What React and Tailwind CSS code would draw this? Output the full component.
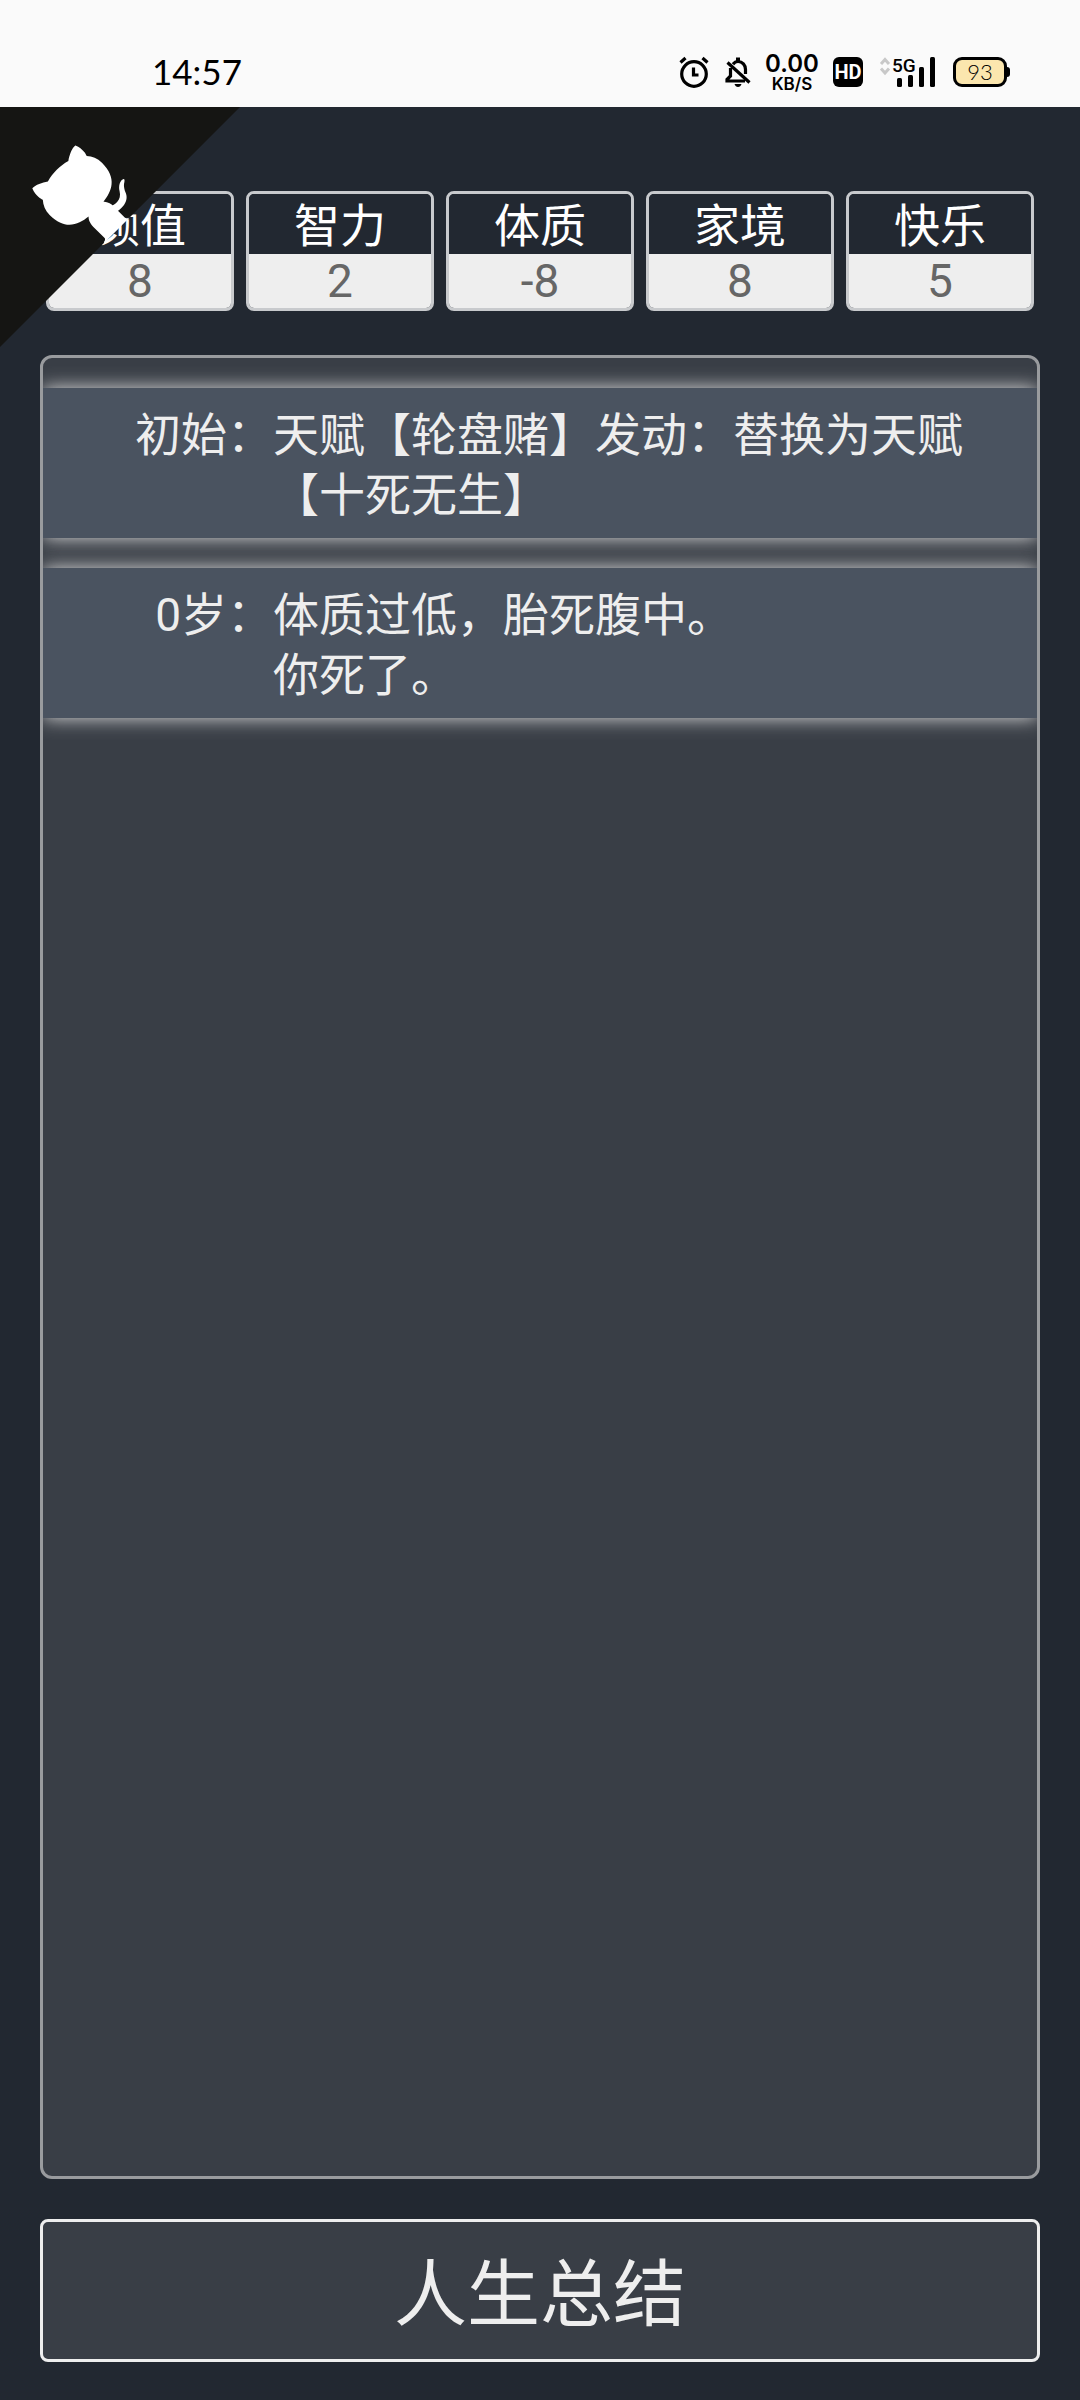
const STATS = [
  { label: '颜值', value: 8 },
  { label: '智力', value: 2 },
  { label: '体质', value: -8 },
  { label: '家境', value: 8 },
  { label: '快乐', value: 5 },
];

const TRAJECTORY = [
  { age: '初始：', lines: ['天赋【轮盘赌】发动：替换为天赋【十死无生】'] },
  { age: '0岁：', lines: ['体质过低，胎死腹中。', '你死了。'] },
];

function AlarmIcon() {
  return (
    <svg width="30" height="32" viewBox="0 0 30 32" fill="none" stroke="#000" className="shrink-0">
      <circle cx="15" cy="18" r="12.3" strokeWidth="3.2" />
      <path d="M14.500 11.500v7.500h5" strokeWidth="3.2" />
      <path d="M1.500 6.500l5-4.500M28.500 6.500l-5-4.500" strokeWidth="3.2" />
    </svg>
  );
}

function MutedBellIcon() {
  return (
    <svg width="26" height="32" viewBox="0 0 26 32" fill="none" stroke="#000" className="shrink-0">
      <path d="M8 8.2C9.500 6.200 11 5.500 13 5.500C17.500 5.500 20.500 9 20.500 13.500V18" strokeWidth="3.2" />
      <path d="M13 1.500v4" strokeWidth="4" />
      <path d="M5.500 12V20L2 23.500V25H20" strokeWidth="3.2" />
      <path d="M2.500 6.500L24.500 26.500" strokeWidth="3.2" />
      <path d="M9.500 28h7c-1 4-6 4-7 0z" fill="#000" stroke="none" />
    </svg>
  );
}

function SignalIcon() {
  return (
    <svg width="58" height="44" viewBox="0 -6 58 44" className="shrink-0">
      <path d="M2 8l4-4.500l4 4.500M2 12.500l4 4.500l4-4.500" fill="none" stroke="#c8c8c8" strokeWidth="3" />
      <text x="13" y="16" fontSize="19" fontWeight="500" fontFamily="Roboto, sans-serif">5G</text>
      <rect x="18" y="22" width="5" height="9" rx="1.500" />
      <rect x="29" y="19" width="5" height="12" rx="1.500" />
      <rect x="40" y="11" width="5" height="20" rx="1.500" />
      <rect x="51" y="1" width="5" height="30" rx="1.500" />
    </svg>
  );
}

function StatusBar() {
  return (
    <header className="h-[107px] bg-[#fafafa] text-black flex items-center justify-between pt-9 pl-[152px] pr-[70px]">
      <time className="font-['Lato',sans-serif] text-[35px] leading-10 pb-0.5">14:57</time>
      <div className="flex items-center">
        <AlarmIcon />
        <div className="ml-4"><MutedBellIcon /></div>
        <div className="ml-3.5 w-[54px] pt-0.5 text-center font-['Inter',sans-serif] font-semibold">
          <div className="text-[24px] leading-[22px]">0.00</div>
          <div className="text-[17px] leading-[18px]">KB/S</div>
        </div>
        <div className="ml-3.5 w-[30px] h-[30px] rounded-md bg-black text-white font-['Roboto',sans-serif] font-bold text-[20px] leading-[30px] text-center">
          HD
        </div>
        <div className="ml-4"><SignalIcon /></div>
        <div className="ml-4 flex items-center">
          <div className="w-[54px] h-[30px] rounded-[9px] border-[3px] border-black bg-[#fbe6ae] font-['Lato',sans-serif] font-light text-[22px] leading-6 text-center">
            93
          </div>
          <div className="w-[3px] h-[10px] bg-black rounded-r-sm" />
        </div>
      </div>
    </header>
  );
}

function GithubCorner() {
  return (
    <a href="https://github.com" aria-label="GitHub" className="absolute top-0 left-0">
      <svg width="240" height="240" viewBox="0 0 250 250" className="block -scale-x-100" aria-hidden="true">
        <path d="M0,0 L115,115 L130,115 L142,142 L250,250 L250,0 Z" fill="#151513" />
        <path d="M128.3,109.0 C113.8,99.7 119.0,89.6 119.0,89.6 C122.0,82.7 120.5,78.6 120.5,78.6 C119.2,72.0 123.4,76.3 123.4,76.3 C127.3,80.9 125.5,87.3 125.5,87.3 C122.9,97.6 130.6,101.9 134.4,103.2" fill="#fff" />
        <path d="M115.0,115.0 C114.9,115.1 118.7,116.5 119.8,115.4 L133.7,101.6 C136.9,99.2 139.9,98.4 142.2,98.6 C133.8,88.0 127.5,74.4 143.8,58.0 C148.5,53.4 154.0,51.2 159.7,51.0 C160.3,49.4 163.2,43.6 171.4,40.1 C171.4,40.1 176.1,42.5 178.8,56.2 C183.1,58.6 187.2,61.8 190.9,65.4 C194.5,69.0 197.7,73.2 200.1,77.6 C213.8,80.2 216.3,84.9 216.3,84.9 C212.7,93.1 206.9,96.0 205.4,96.6 C205.1,102.4 203.0,107.8 198.3,112.5 C181.9,128.9 168.3,122.5 157.7,114.1 C157.9,116.9 156.7,120.9 152.7,124.9 L141.0,136.5 C139.8,137.7 141.6,141.9 141.8,141.8 Z" fill="#fff" />
      </svg>
    </a>
  );
}

export default function App() {
  return (
    <div className="min-h-screen flex flex-col bg-[#222831] text-[#eee] font-['Roboto','Noto_Sans_CJK_SC',sans-serif]">
      <StatusBar />

      <main className="relative flex-1 flex flex-col px-10 pt-[84px] pb-[38px]">
        <ul className="grid grid-cols-5 gap-3 px-1.5">
          {STATS.map(s => (
            <li key={s.label} className="rounded-lg border-[3px] border-[#c8cacd] overflow-hidden text-center text-[46px]">
              <div className="h-[60px] pt-1 leading-[56px] bg-[#222831] text-white">{s.label}</div>
              <div className="h-[54px] leading-[54px] bg-[#eee] text-[#666]">{s.value}</div>
            </li>
          ))}
        </ul>

        <ul className="mt-11 flex-1 flex flex-col gap-[30px] py-[30px] rounded-xl border-[3px] border-[#999b9e] bg-[#393e46] overflow-hidden">
          {TRAJECTORY.map(t => (
            <li key={t.age} className="flex pt-[17px] pb-[13px] pr-[30px] bg-[#4a5360] shadow-[0_0_18px_#ddd] text-[46px] leading-[60px]">
              <span className="w-[230px] shrink-0 text-right">{t.age}</span>
              <span className="flex-1">
                {t.lines.map(line => <span key={line} className="block">{line}</span>)}
              </span>
            </li>
          ))}
        </ul>

        <button className="mt-10 h-[143px] pt-2 rounded-lg border-[3px] border-[#eee] bg-[#393e46] text-[73px] leading-[120px] cursor-pointer">
          人生总结
        </button>

        <GithubCorner />
      </main>
    </div>
  );
}
